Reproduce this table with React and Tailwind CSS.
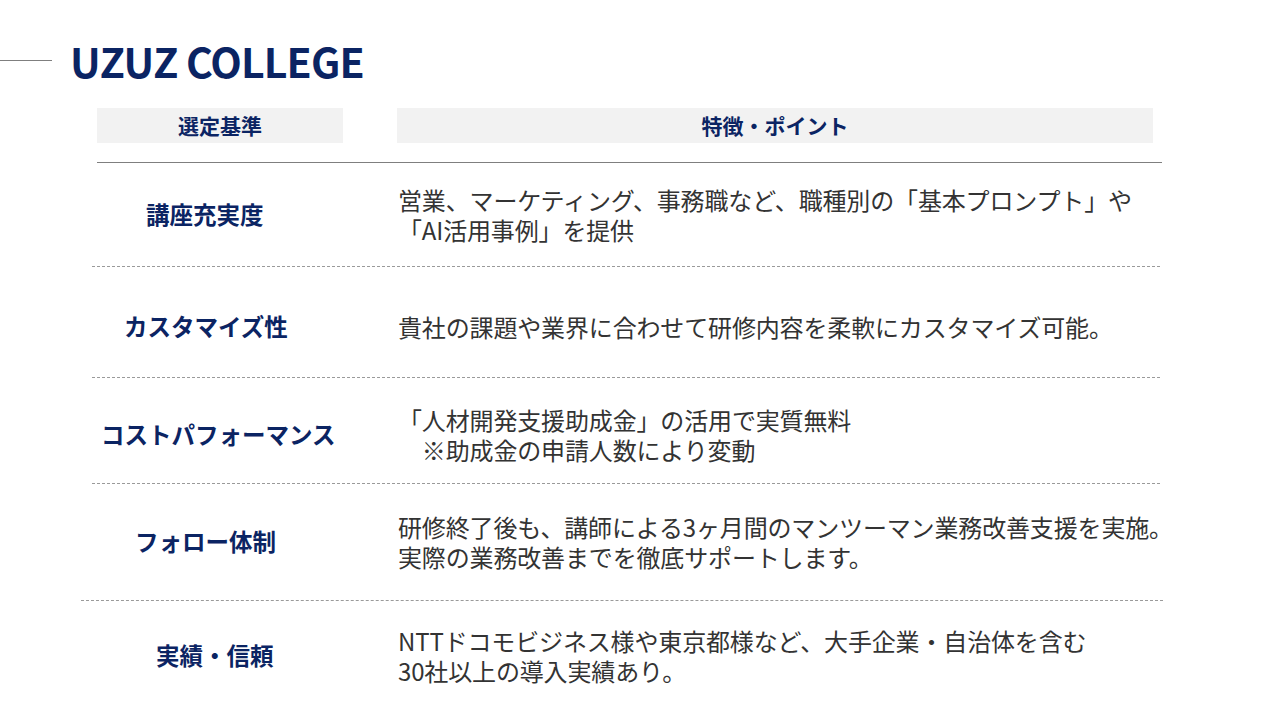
const rows = [
  {
    label: "講座充実度",
    labelPad: "pl-[146px]",
    h: "h-[103px]",
    pt: "pt-0",
    lines: ["営業、マーケティング、事務職など、職種別の「基本プロンプト」や", "「AI活用事例」を提供"],
  },
  {
    label: "カスタマイズ性",
    labelPad: "pl-[124px]",
    h: "h-[110px]",
    pt: "pt-[10px]",
    lines: ["貴社の課題や業界に合わせて研修内容を柔軟にカスタマイズ可能。"],
  },
  {
    label: "コストパフォーマンス",
    labelPad: "pl-[101px]",
    h: "h-[105px]",
    pt: "pt-[9px]",
    lines: ["「人材開発支援助成金」の活用で実質無料", "　※助成金の申請人数により変動"],
  },
  {
    label: "フォロー体制",
    labelPad: "pl-[135px]",
    h: "h-[116px]",
    pt: "pt-0",
    lines: ["研修終了後も、講師による3ヶ月間のマンツーマン業務改善支援を実施。", "実際の業務改善までを徹底サポートします。"],
  },
  {
    label: "実績・信頼",
    labelPad: "pl-[156px]",
    h: "h-[110px]",
    pt: "pt-0",
    lines: ["NTTドコモビジネス様や東京都様など、大手企業・自治体を含む", "30社以上の導入実績あり。"],
  },
];

// dashed dividers under rows 1-4 (last one is a bit wider)
const dividers = ["ml-[92px] w-[1068px]", "ml-[92px] w-[1068px]", "ml-[92px] w-[1068px]", "ml-[81px] w-[1082px]"];

const App = () => {
  return (
    <div
      className="w-[1280px] h-[720px] bg-white overflow-hidden text-[#333333]"
      style={{ fontFamily: '"Noto Sans CJK JP", "Noto Sans", sans-serif' }}
    >
      {/* title */}
      <div className="flex items-center pt-[33px] h-[87px]">
        <div className="w-[52px] h-px bg-[#7f7f7f]" />
        <h1 className="ml-[18px] text-[41px] font-bold leading-none text-[#0b2463] tracking-[-0.9px]">
          UZUZ COLLEGE
        </h1>
      </div>

      {/* header */}
      <div className="flex mt-[21px] ml-[97px]">
        <div className="w-[246px] h-[35px] bg-[#f2f2f2] flex items-center justify-center text-[21px] font-bold text-[#0b2463]">
          選定基準
        </div>
        <div className="ml-[54px] w-[756px] h-[35px] bg-[#f2f2f2] flex items-center justify-center text-[21px] font-bold text-[#0b2463]">
          特徴・ポイント
        </div>
      </div>
      <div className="mt-[19px] ml-[97px] w-[1065px] h-px bg-[#7f7f7f]" />

      {rows.map((row, i) => (
        <div key={row.label}>
          <div className={`flex items-center ${row.h} ${row.pt}`}>
            <div className={`w-[398px] shrink-0 ${row.labelPad} text-[23.5px] font-bold text-[#0b2463] leading-none`}>
              {row.label}
            </div>
            <div className="text-[24px] leading-[30px] tracking-[-0.15px] whitespace-nowrap">
              {row.lines.map((line) => (
                <div key={line}>{line}</div>
              ))}
            </div>
          </div>
          {dividers[i] && <div className={`${dividers[i]} border-t border-dashed border-[#9a9a9a]`} />}
        </div>
      ))}
    </div>
  );
};

export default App;
